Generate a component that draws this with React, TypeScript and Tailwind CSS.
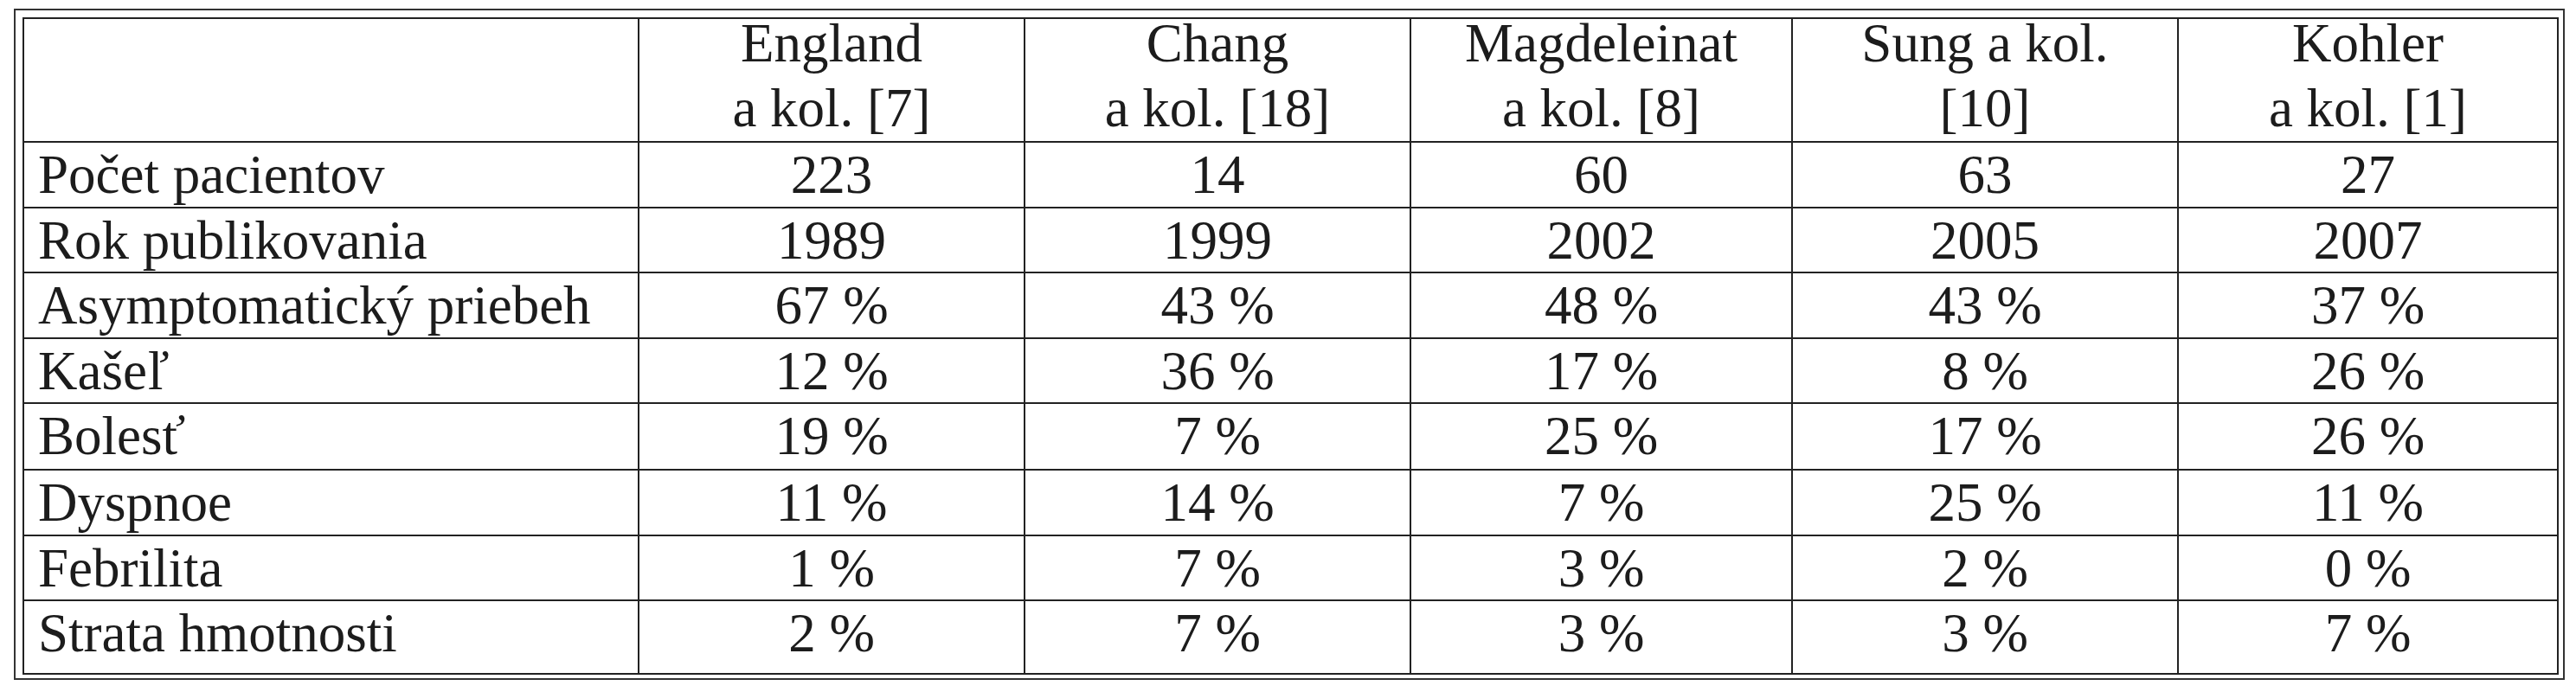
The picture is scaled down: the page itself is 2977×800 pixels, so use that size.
const header = [
  ["England", "a kol. [7]"],
  ["Chang", "a kol. [18]"],
  ["Magdeleinat", "a kol. [8]"],
  ["Sung a kol.", "[10]"],
  ["Kohler", "a kol. [1]"],
]

const rows: [string, string[]][] = [
  ["Počet pacientov", ["223", "14", "60", "63", "27"]],
  ["Rok publikovania", ["1989", "1999", "2002", "2005", "2007"]],
  ["Asymptomatický priebeh", ["67 %", "43 %", "48 %", "43 %", "37 %"]],
  ["Kašeľ", ["12 %", "36 %", "17 %", "8 %", "26 %"]],
  ["Bolesť", ["19 %", "7 %", "25 %", "17 %", "26 %"]],
  ["Dyspnoe", ["11 %", "14 %", "7 %", "25 %", "11 %"]],
  ["Febrilita", ["1 %", "7 %", "3 %", "2 %", "0 %"]],
  ["Strata hmotnosti", ["2 %", "7 %", "3 %", "3 %", "7 %"]],
]

export default function App() {
  return (
    <div
      className="min-h-[800px] w-[2977px] bg-white pl-[16px] pt-[10px] text-[63px] text-[#1c1c1c]"
      style={{ fontFamily: '"Liberation Serif", "Times New Roman", serif' }}
    >
      <div className="w-[2948px] border-2 border-[#333] pb-[4px] pl-[8px] pr-[5px] pt-[8px]">
        <div className="w-[2931px] border-2 border-[#222]">
          <div className="grid grid-cols-[711px_446px_446px_441px_446px_437px] grid-rows-[143px_76px_75px_76px_75px_77px_76px_75px_83px]">
            {/* header row */}
            <div className="border-b-2 border-r-2 border-[#222]" />
            {header.map((h, i) => (
              <div
                key={i}
                className={`border-b-2 border-[#222] text-center ${i < header.length - 1 ? "border-r-2" : ""}`}
              >
                <div className="-mt-[9px] leading-[75px]">
                  <div>{h[0]}</div>
                  <div>{h[1]}</div>
                </div>
              </div>
            ))}

            {rows.map(([label, vals], r) => {
              const last = r === rows.length - 1
              return [
                <div
                  key={`l${r}`}
                  className={`whitespace-nowrap border-r-2 border-[#222] pl-[16px] pt-[2px] leading-[70px] ${last ? "" : "border-b-2"}`}
                >
                  {label}
                </div>,
                ...vals.map((v, c) => (
                  <div
                    key={`${r}-${c}`}
                    className={`border-[#222] pt-[2px] text-center leading-[70px] ${last ? "" : "border-b-2"} ${c < vals.length - 1 ? "border-r-2" : ""}`}
                  >
                    {v}
                  </div>
                )),
              ]
            })}
          </div>
        </div>
      </div>
    </div>
  )
}
